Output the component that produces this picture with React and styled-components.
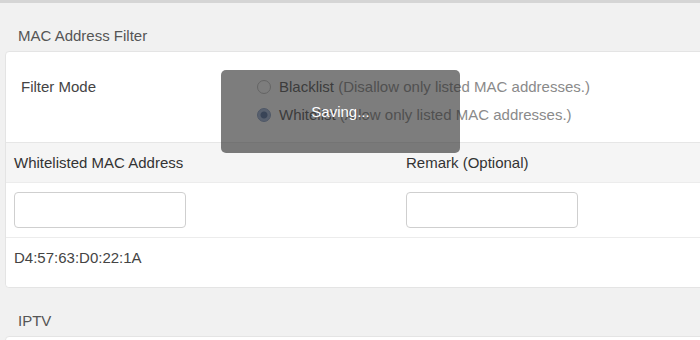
import styled, { createGlobalStyle } from "styled-components";

const GlobalStyle = createGlobalStyle`
	body {
		margin: 0;
		background: #f1f1f1;
		font-family: "Liberation Sans", Arial, sans-serif;
		font-size: 15px;
		overflow: hidden;
	}
`;

const Page = styled.div`
	position: relative;
	width: 700px;
	height: 340px;
	overflow: hidden;
	border-top: 3px solid #d5d5d5;
	box-sizing: border-box;
`;
const SectionTitle = styled.div`
	padding: 23px 0 5px 18px;
	line-height: 20px;
	color: #555;
`;
const Card = styled.div`
	margin-left: 5px;
	margin-right: -20px;
	background: #fff;
	border: 1px solid #e4e4e4;
	border-radius: 4px;
	min-height: ${(p) => p.$minHeight || "auto"};
`;
const FilterRow = styled.div`
	display: grid;
	grid-template-columns: 236px 1fr;
	padding: 25px 0 17px 15px;
	line-height: 20px;
`;
const Label = styled.div`
	color: #444;
`;
const Options = styled.div`
	display: flex;
	flex-direction: column;
	gap: 8px;
`;
const Option = styled.label`
	display: flex;
	align-items: center;
	gap: 8px;
	color: #555;
`;
const Radio = styled.span`
	width: 12px;
	height: 12px;
	border-radius: 50%;
	border: 1px solid #bdbdbd;
	background: ${(p) => (p.$checked ? "radial-gradient(circle, #4d6a9c 0 3px, #9fb4d8 4px)" : "#fff")};
	border-color: ${(p) => (p.$checked ? "#8299c2" : "#bdbdbd")};
`;
const Hint = styled.span`
	color: #8a8a8a;
`;
const Grid = styled.div`
	display: grid;
	grid-template-columns: 392px 1fr;
	border-top: 1px solid #e6e6e6;
	border-bottom: ${(p) => (p.$last ? "none" : "1px solid #ececec")};
	background: ${(p) => (p.$head ? "#f5f5f5" : "#fff")};
	border-radius: ${(p) => (p.$last ? "0 0 4px 4px" : "0")};
	& + & {
		border-top: none;
	}
`;
const HeadCell = styled.div`
	padding: 10px 8px 9px;
	line-height: 20px;
	color: #333;
`;
const Cell = styled.div`
	padding: ${(p) => p.$pad || "9px 8px 9px"};
	line-height: 20px;
	color: #444;
`;
const Input = styled.input`
	display: block;
	width: 172px;
	height: 36px;
	box-sizing: border-box;
	border: 1px solid #cfcfcf;
	border-radius: 4px;
	outline: none;
	font: inherit;
	padding: 0 8px;
`;
const Toast = styled.div`
	position: absolute;
	left: 221px;
	top: 67px;
	width: 239px;
	height: 83px;
	border-radius: 5px;
	background: rgba(45, 45, 45, 0.62);
	color: #fff;
	display: flex;
	align-items: center;
	justify-content: center;
	font-size: 15px;
`;

export default function App() {
	return (
		<>
			<GlobalStyle />
			<Page>
				<SectionTitle>MAC Address Filter</SectionTitle>
				<Card>
					<FilterRow>
						<Label>Filter Mode</Label>
						<Options>
							<Option>
								<Radio />
								<span>
									Blacklist <Hint>(Disallow only listed MAC addresses.)</Hint>
								</span>
							</Option>
							<Option>
								<Radio $checked />
								<span>
									Whitelist <Hint>(Allow only listed MAC addresses.)</Hint>
								</span>
							</Option>
						</Options>
					</FilterRow>
					<Grid $head>
						<HeadCell>Whitelisted MAC Address</HeadCell>
						<HeadCell>Remark (Optional)</HeadCell>
					</Grid>
					<Grid>
						<Cell>
							<Input />
						</Cell>
						<Cell>
							<Input />
						</Cell>
					</Grid>
					<Grid $last>
						<Cell $pad="10px 8px 19px">D4:57:63:D0:22:1A</Cell>
						<Cell $pad="10px 8px 19px" />
					</Grid>
				</Card>
				<SectionTitle>IPTV</SectionTitle>
				<Card $minHeight="40px" />
				<Toast>Saving...</Toast>
			</Page>
		</>
	);
}
